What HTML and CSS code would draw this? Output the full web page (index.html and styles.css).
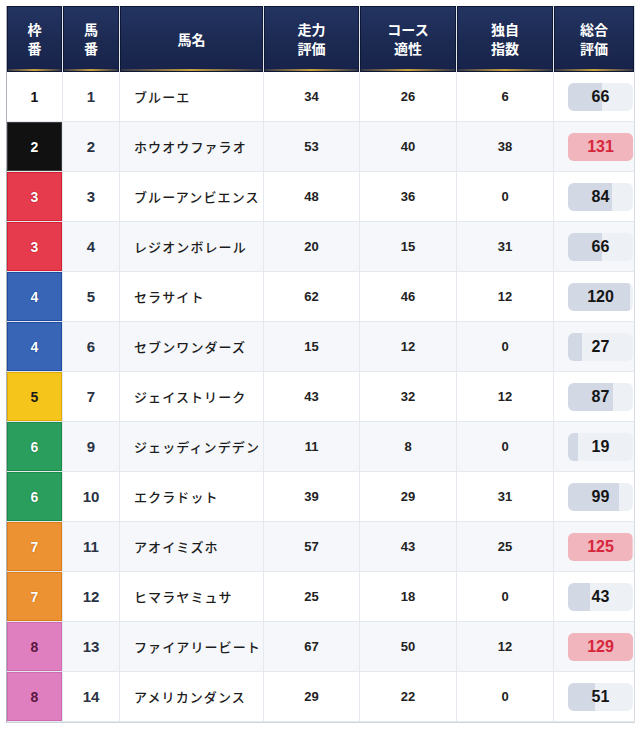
FILE: index.html
```html
<!DOCTYPE html>
<html lang="ja">
<head>
<meta charset="utf-8">
<title>出馬表</title>
<link rel="stylesheet" href="styles.css">
</head>
<body>
<table class="race">
  <colgroup>
    <col class="c-waku"><col class="c-uma"><col class="c-name"><col class="c-n1"><col class="c-n2"><col class="c-n3"><col class="c-total">
  </colgroup>
  <thead>
    <tr>
      <th>枠<br>番</th>
      <th>馬<br>番</th>
      <th>馬名</th>
      <th>走力<br>評価</th>
      <th>コース<br>適性</th>
      <th>独自<br>指数</th>
      <th>総合<br>評価</th>
    </tr>
  </thead>
  <tbody>
    <tr><td class="waku w1">1</td><td class="uma">1</td><td class="name">ブルーエ</td><td class="num">34</td><td class="num">26</td><td class="num">6</td><td class="total"><div class="bar"><div class="fill" style="width:52.8%"></div><span>66</span></div></td></tr>
    <tr><td class="waku w2">2</td><td class="uma">2</td><td class="name">ホウオウファラオ</td><td class="num">53</td><td class="num">40</td><td class="num">38</td><td class="total"><div class="bar hot"><div class="fill" style="width:100%"></div><span>131</span></div></td></tr>
    <tr><td class="waku w3">3</td><td class="uma">3</td><td class="name">ブルーアンビエンス</td><td class="num">48</td><td class="num">36</td><td class="num">0</td><td class="total"><div class="bar"><div class="fill" style="width:67.2%"></div><span>84</span></div></td></tr>
    <tr><td class="waku w3">3</td><td class="uma">4</td><td class="name">レジオンボレール</td><td class="num">20</td><td class="num">15</td><td class="num">31</td><td class="total"><div class="bar"><div class="fill" style="width:52.8%"></div><span>66</span></div></td></tr>
    <tr><td class="waku w4">4</td><td class="uma">5</td><td class="name">セラサイト</td><td class="num">62</td><td class="num">46</td><td class="num">12</td><td class="total"><div class="bar"><div class="fill" style="width:96%"></div><span>120</span></div></td></tr>
    <tr><td class="waku w4">4</td><td class="uma">6</td><td class="name">セブンワンダーズ</td><td class="num">15</td><td class="num">12</td><td class="num">0</td><td class="total"><div class="bar"><div class="fill" style="width:21.6%"></div><span>27</span></div></td></tr>
    <tr><td class="waku w5">5</td><td class="uma">7</td><td class="name">ジェイストリーク</td><td class="num">43</td><td class="num">32</td><td class="num">12</td><td class="total"><div class="bar"><div class="fill" style="width:69.6%"></div><span>87</span></div></td></tr>
    <tr><td class="waku w6">6</td><td class="uma">9</td><td class="name">ジェッディンデデン</td><td class="num">11</td><td class="num">8</td><td class="num">0</td><td class="total"><div class="bar"><div class="fill" style="width:15.2%"></div><span>19</span></div></td></tr>
    <tr><td class="waku w6">6</td><td class="uma">10</td><td class="name">エクラドット</td><td class="num">39</td><td class="num">29</td><td class="num">31</td><td class="total"><div class="bar"><div class="fill" style="width:79.2%"></div><span>99</span></div></td></tr>
    <tr><td class="waku w7">7</td><td class="uma">11</td><td class="name">アオイミズホ</td><td class="num">57</td><td class="num">43</td><td class="num">25</td><td class="total"><div class="bar hot"><div class="fill" style="width:98%"></div><span>125</span></div></td></tr>
    <tr><td class="waku w7">7</td><td class="uma">12</td><td class="name">ヒマラヤミュサ</td><td class="num">25</td><td class="num">18</td><td class="num">0</td><td class="total"><div class="bar"><div class="fill" style="width:34.4%"></div><span>43</span></div></td></tr>
    <tr><td class="waku w8">8</td><td class="uma">13</td><td class="name">ファイアリービート</td><td class="num">67</td><td class="num">50</td><td class="num">12</td><td class="total"><div class="bar hot"><div class="fill" style="width:100%"></div><span>129</span></div></td></tr>
    <tr><td class="waku w8">8</td><td class="uma">14</td><td class="name">アメリカンダンス</td><td class="num">29</td><td class="num">22</td><td class="num">0</td><td class="total"><div class="bar"><div class="fill" style="width:40.8%"></div><span>51</span></div></td></tr>
  </tbody>
</table>
</body>
</html>
```

FILE: styles.css
```css
html, body {
  margin: 0;
  padding: 0;
  background: #ffffff;
}
body {
  padding: 6px;
  font-family: "Liberation Sans", "Noto Sans CJK JP", sans-serif;
  color: #1a1a1a;
}
.race {
  width: 628px;
  table-layout: fixed;
  border-collapse: separate;
  border-spacing: 0;
  border-left: 1px solid #aeb2ba;
  border-bottom: 1px solid #cfd3da;
}
.c-waku { width: 56px; }
.c-uma { width: 57px; }
.c-name { width: 144px; }
.c-n1 { width: 96px; }
.c-n2 { width: 97px; }
.c-n3 { width: 97px; }
.c-total { width: 81px; }

.race th {
  height: 66px;
  padding: 0;
  box-sizing: border-box;
  color: #ffffff;
  font-family: "Noto Sans CJK JP", sans-serif;
  font-weight: 700;
  font-size: 14px;
  line-height: 19px;
  text-align: center;
  vertical-align: middle;
  border-right: 1px solid #e6e9ef;
  background-color: #1c2850;
  background-image:
    linear-gradient(90deg, rgba(200,160,70,0.15) 0%, #c9a03e 50%, rgba(200,160,70,0.15) 100%),
    linear-gradient(180deg, #243462 0%, #1c2a52 55%, #17224a 100%);
  background-size: 100% 2px, 100% 100%;
  background-position: left bottom 1px, 0 0;
  background-repeat: no-repeat;
  box-shadow: inset 0 0 0 1px #0e1733;
}
.race th:last-child { border-right: 1px solid #d6dae2; }

.race td {
  height: 50px;
  padding: 0;
  box-sizing: border-box;
  border-right: 1px solid #e4e8ef;
  border-bottom: 1px solid #e4e8ef;
  text-align: center;
  vertical-align: middle;
}
.race tbody tr:nth-child(odd) td { background: #ffffff; }
.race tbody tr:nth-child(even) td { background: #f5f7fb; }
.race td:last-child { border-right: 1px solid #d6dae2; }

.race td.waku {
  font-weight: 700;
  font-size: 14px;
  color: #ffffff;
  text-shadow: 0 0 1px rgba(0,0,0,0.7), 0 0 1px rgba(0,0,0,0.5);
}
.race tbody tr td.w1 { background: #ffffff; color: #111111; text-shadow: none; }
.race tbody tr td.w2 { background: #111111; box-shadow: inset 0 0 0 1px #3a3a3a; }
.race tbody tr td.w3 { background: #e63a4d; box-shadow: inset 0 0 0 1px #d61f33; text-shadow: 0 0 1px #b0101f, 0 0 1px #b0101f; }
.race tbody tr td.w4 { background: #3865b6; box-shadow: inset 0 0 0 1px #1f4aa0; text-shadow: 0 0 1px #123a8a, 0 0 1px #123a8a; }
.race tbody tr td.w5 { background: #f5c51c; box-shadow: inset 0 0 0 1px #e0ab00; color: #1a1a1a; text-shadow: none; }
.race tbody tr td.w6 { background: #2a9e5c; box-shadow: inset 0 0 0 1px #1b8a48; text-shadow: 0 0 1px #0d6a33, 0 0 1px #0d6a33; }
.race tbody tr td.w7 { background: #ec9232; box-shadow: inset 0 0 0 1px #dd7d18; text-shadow: 0 0 1px #b85f00, 0 0 1px #b85f00; }
.race tbody tr td.w8 { background: #e07fc0; box-shadow: inset 0 0 0 1px #d06aae; color: #5b1740; text-shadow: none; }

.race td.uma {
  font-weight: 700;
  font-size: 15px;
  color: #2a3344;
}
.race td.name {
  text-align: left;
  padding-left: 14px;
  font-family: "Noto Sans CJK JP", sans-serif;
  font-weight: 500;
  font-size: 13px;
  letter-spacing: 1.1px;
  color: #1c1c1c;
  white-space: nowrap;
}
.race td.num {
  font-weight: 700;
  font-size: 13px;
  color: #222222;
}
.race td.total {
  text-align: left;
  padding-left: 14px;
}
.bar {
  position: relative;
  width: 65px;
  height: 28px;
  border-radius: 6px;
  background: #edf0f5;
  overflow: hidden;
  display: flex;
  align-items: center;
  justify-content: center;
}
.bar .fill {
  position: absolute;
  left: 0;
  top: 0;
  bottom: 0;
  background: #d2d9e5;
}
.bar span {
  position: relative;
  font-weight: 700;
  font-size: 16px;
  color: #151515;
}
.bar.hot { background: #f6cdd3; }
.bar.hot .fill { background: #f0b5bd; }
.bar.hot span { color: #d6263b; }
```
